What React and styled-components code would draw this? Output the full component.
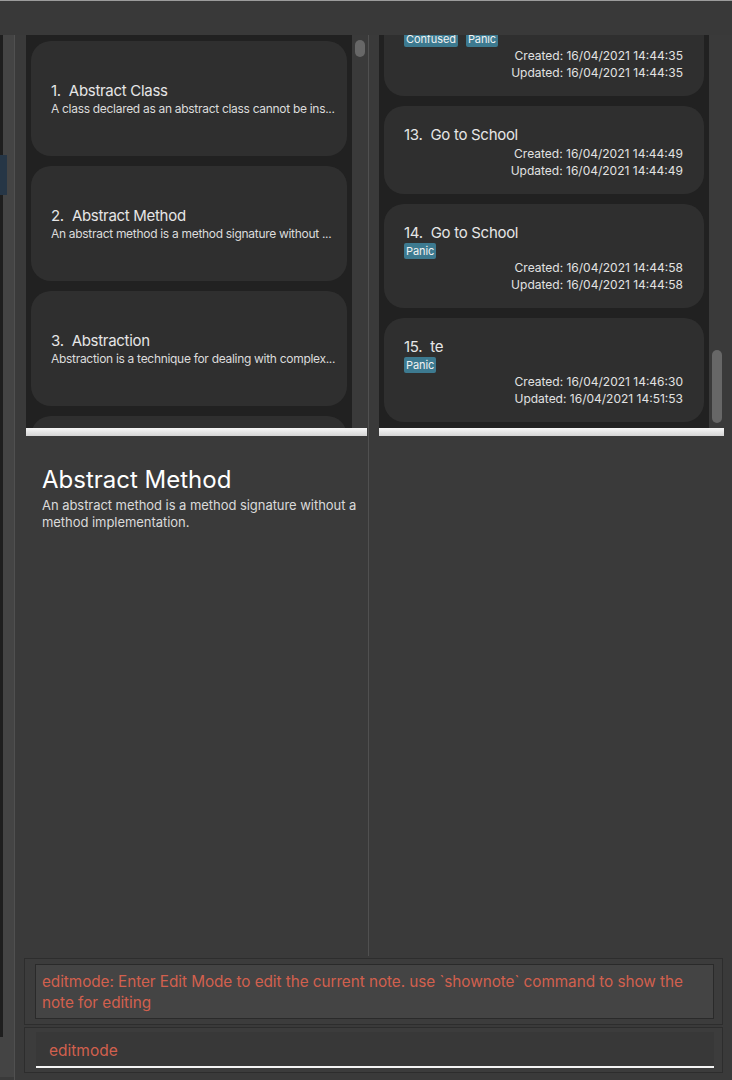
import React from 'react';
import styled, { createGlobalStyle } from 'styled-components';

const GlobalStyle = createGlobalStyle`
  html, body {
    margin: 0;
    padding: 0;
    background: #3a3a3a;
  }
  body {
    font-family: Inter, "Noto Sans", sans-serif;
  }
`;

const Window = styled.div`
  width: 732px;
  height: 1080px;
  display: flex;
  flex-direction: column;
  background: #3a3a3a;
  overflow: hidden;
`;

const MenuBar = styled.div`
  flex: none;
  height: 34px;
  background: #393939;
  border-top: 1px solid #9c9c9c;
`;

const Body = styled.div`
  flex: 1;
  display: flex;
  min-height: 0;
`;

const SidePane = styled.div`
  flex: none;
  width: 14px;
  display: flex;
  padding-bottom: 3px;
  border-right: 1px solid #505050;
`;

const SideTrack = styled.div`
  flex: 1;
  display: flex;
  background: #444444;
`;

const SideList = styled.div`
  width: 7px;
  margin-bottom: 40px;
  background: linear-gradient(to right, #1e1e1e 3px, #444444 3px);
`;

const SideItem = styled.div`
  height: 40px;
  margin-top: 120px;
  background: #263646;
`;

const Main = styled.div`
  flex: 1;
  display: flex;
  flex-direction: column;
  min-width: 0;
`;

const Columns = styled.div`
  flex: 1;
  display: flex;
  min-height: 0;
`;

const Column = styled.div`
  display: flex;
  flex-direction: column;
  box-sizing: border-box;
  width: ${p => p.$width ? `${p.$width}px` : 'auto'};
  flex: ${p => p.$width ? 'none' : '1'};
  padding: ${p => p.$pad};
`;

const ColumnRule = styled.div`
  flex: none;
  width: 1px;
  background: #505050;
`;

const ListFrame = styled.div`
  flex: none;
  height: 393px;
  display: flex;
`;

const ListBody = styled.div`
  flex: 1;
  display: flex;
  flex-direction: column;
  justify-content: ${p => p.$bottom ? 'flex-end' : 'flex-start'};
  gap: 10px;
  padding: ${p => p.$bottom ? '0 5px 6px' : '6px 5px 0'};
  background: #212121;
  overflow: hidden;
`;

const ScrollTrack = styled.div`
  flex: none;
  width: 15px;
  box-sizing: border-box;
  padding: 0 2px 0 3px;
  background: #3a3a3a;
`;

const ScrollThumb = styled.div`
  height: ${p => p.$size}px;
  margin-top: ${p => p.$offset}px;
  border-radius: 5px;
  background: #676767;
`;

const SplitBar = styled.div`
  flex: none;
  height: 8px;
  background: linear-gradient(#f6f6f6, #d4d4d4);
`;

const NoteCard = styled.div`
  flex: none;
  min-height: 115px;
  box-sizing: border-box;
  display: flex;
  flex-direction: column;
  justify-content: center;
  padding: 0 10px 0 20px;
  border-radius: 20px;
  background: #2f2f2f;
`;

const EntryCard = styled.div`
  flex: none;
  padding: 19px 21px 15px 20px;
  border-radius: 20px;
  background: #2f2f2f;
`;

const CardTitle = styled.div`
  font-size: 15px;
  line-height: 20px;
  letter-spacing: -0.3px;
  color: #e6e6e6;
  white-space: nowrap;
`;

const Index = styled.span`
  margin-right: 8px;
`;

const Snippet = styled.div`
  font-size: 12px;
  line-height: 16px;
  letter-spacing: -0.3px;
  color: #dcdcdc;
  white-space: nowrap;
`;

const TagRow = styled.div`
  display: flex;
  gap: 8px;
`;

const Tag = styled.span`
  height: 16px;
  padding: 0 2px;
  border-radius: 2px;
  background: #3d7a90;
  color: #f2f2f2;
  font-size: 11px;
  line-height: 16px;
  letter-spacing: -0.1px;
`;

const Stamp = styled.div`
  font-size: 12px;
  line-height: 17px;
  color: #e2e2e2;
  text-align: right;
  white-space: nowrap;
`;

const Detail = styled.div`
  flex: 1;
  padding: 29px 10px 0 16px;
`;

const DetailTitle = styled.div`
  font-size: 24px;
  line-height: 30px;
  color: #ffffff;
  margin-bottom: 2px;
`;

const DetailText = styled.div`
  font-size: 13px;
  line-height: 17px;
  letter-spacing: -0.05px;
  color: #dadada;
`;

const Console = styled.div`
  flex: none;
  display: flex;
  flex-direction: column;
  gap: 2px;
  padding: 2px 9px 7px;
`;

const ConsoleBox = styled.div`
  padding: ${p => p.$pad};
  background: #3c3c3c;
  border: 1px solid #2d2d2d;
`;

const ResultBox = styled.div`
  height: 55px;
  box-sizing: border-box;
  padding: 6px 4px 0 6px;
  background: #444444;
  border: 1px solid #2a2a2a;
  color: #d2604e;
  font-size: 15.3px;
  line-height: 21px;
  letter-spacing: -0.05px;
`;

const CommandField = styled.div`
  height: 36px;
  box-sizing: border-box;
  display: flex;
  align-items: center;
  padding: 2px 0 0 13px;
  background: #383838;
  border-bottom: 2px solid #f4f4f4;
  margin-left: 1px;
  color: #d2604e;
  font-size: 15.5px;
`;

// only the rows that show inside the list viewports carry text
const notes = [
  { id: 1, title: 'Abstract Class', text: 'A class declared as an abstract class cannot be ins...' },
  { id: 2, title: 'Abstract Method', text: 'An abstract method is a method signature without ...' },
  { id: 3, title: 'Abstraction', text: 'Abstraction is a technique for dealing with complex...' },
  { id: 4 },
];

const entries = [
  { id: 12, tags: ['Confused', 'Panic'], created: '16/04/2021 14:44:35', updated: '16/04/2021 14:44:35' },
  { id: 13, title: 'Go to School', tags: [], created: '16/04/2021 14:44:49', updated: '16/04/2021 14:44:49' },
  { id: 14, title: 'Go to School', tags: ['Panic'], created: '16/04/2021 14:44:58', updated: '16/04/2021 14:44:58' },
  { id: 15, title: 'te', tags: ['Panic'], created: '16/04/2021 14:46:30', updated: '16/04/2021 14:51:53' },
];

export default function App() {
  return (
    <>
      <GlobalStyle />
      <Window>
        <MenuBar />
        <Body>
          <SidePane>
            <SideTrack>
              <SideList>
                <SideItem />
              </SideList>
            </SideTrack>
          </SidePane>
          <Main>
            <Columns>
              <Column $width={353} $pad="0 1px 0 11px">
                <ListFrame>
                  <ListBody>
                    {notes.map(n => (
                      <NoteCard key={n.id}>
                        {n.title && <CardTitle><Index>{n.id}.</Index>{n.title}</CardTitle>}
                        {n.text && <Snippet>{n.text}</Snippet>}
                      </NoteCard>
                    ))}
                  </ListBody>
                  <ScrollTrack>
                    <ScrollThumb $offset={5} $size={17} />
                  </ScrollTrack>
                </ListFrame>
                <SplitBar />
                <Detail>
                  <DetailTitle>Abstract Method</DetailTitle>
                  <DetailText>An abstract method is a method signature without a method implementation.</DetailText>
                </Detail>
              </Column>
              <ColumnRule />
              <Column $pad="0 8px 0 10px">
                <ListFrame>
                  <ListBody $bottom>
                    {entries.map(e => (
                      <EntryCard key={e.id}>
                        {e.title && <CardTitle><Index>{e.id}.</Index>{e.title}</CardTitle>}
                        {e.tags.length > 0 && (
                          <TagRow>
                            {e.tags.map(t => <Tag key={t}>{t}</Tag>)}
                          </TagRow>
                        )}
                        <Stamp>Created: {e.created}</Stamp>
                        <Stamp>Updated: {e.updated}</Stamp>
                      </EntryCard>
                    ))}
                  </ListBody>
                  <ScrollTrack>
                    <ScrollThumb $offset={315} $size={73} />
                  </ScrollTrack>
                </ListFrame>
                <SplitBar />
              </Column>
            </Columns>
            <Console>
              <ConsoleBox $pad="5px 8px 5px 10px">
                <ResultBox>
                  editmode: Enter Edit Mode to edit the current note. use `shownote` command to show the note for editing
                </ResultBox>
              </ConsoleBox>
              <ConsoleBox $pad="4px 8px 4px 10px">
                <CommandField>editmode</CommandField>
              </ConsoleBox>
            </Console>
          </Main>
        </Body>
      </Window>
    </>
  );
}
